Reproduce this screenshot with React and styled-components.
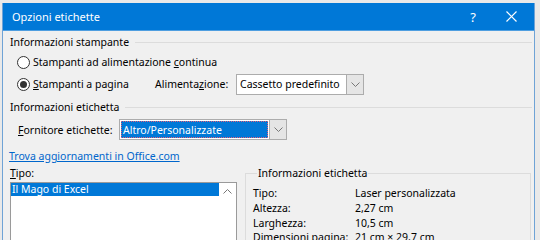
import React from "react";
import styled, { createGlobalStyle } from "styled-components";

const Global = createGlobalStyle`
  html, body { margin: 0; padding: 0; background: #e9e9e9; }
  body { font-family: "Noto Sans", "Liberation Sans", sans-serif; font-size: 10.5px; color: #000; }
  * { box-sizing: border-box; }
`;

const Frame = styled.div`
  padding: 3px 5px 0 2px;
  width: 540px;
  height: 240px;
  overflow: hidden;
`;

const Window = styled.div`
  width: 533px;
  height: 260px;
  display: flex;
  flex-direction: column;
  border-left: 1px solid #6fa3d6;
  border-right: 1px solid #6fa3d6;
  background: #f0f0f0;
`;

const TitleBar = styled.div`
  height: 28px;
  background: #0078d7;
  display: flex;
  align-items: center;
  padding-left: 9px;
  color: #fff;
  font-size: 11px;
  border-bottom: 1px solid #4f9ee0;
`;

const Title = styled.div`
  flex: 1;
`;

const TitleButton = styled.div`
  width: ${(p) => p.$w}px;
  display: flex;
  justify-content: center;
  align-items: center;
  font-size: 13px;
`;

const Body = styled.div`
  padding: 3px 0 0 7px;
  display: flex;
  flex-direction: column;
`;

const SectionHeader = styled.div`
  height: 16px;
  display: flex;
  align-items: center;
  gap: 6px;
  margin-top: ${(p) => p.$mt || 0}px;
  &::after {
    content: "";
    flex: 1;
    height: 1px;
    background: #dcdcdc;
    margin-right: 2px;
  }
`;

const Row = styled.div`
  height: ${(p) => p.$h || 22}px;
  display: flex;
  align-items: center;
  margin-top: ${(p) => p.$mt || 0}px;
  padding-left: ${(p) => p.$pl || 0}px;
`;

const RadioCircle = styled.span`
  width: 13px;
  height: 13px;
  border-radius: 50%;
  border: 1px solid #333;
  background: #fff;
  display: inline-flex;
  align-items: center;
  justify-content: center;
  margin-left: 7px;
  margin-right: 3px;
  &::after {
    content: "";
    width: 7px;
    height: 7px;
    border-radius: 50%;
    background: ${(p) => (p.$on ? "#333" : "transparent")};
  }
`;

const Label = styled.span`
  width: ${(p) => (p.$w ? p.$w + "px" : "auto")};
  margin-left: ${(p) => p.$ml || 0}px;
  white-space: nowrap;
`;

const Combo = styled.div`
  width: ${(p) => p.$w}px;
  height: 21px;
  display: flex;
  border: 1px solid #acacac;
  background: #fff;
`;

const ComboText = styled.div`
  flex: 1;
  display: flex;
  align-items: center;
  padding-left: 2px;
  margin: 1px;
  ${(p) =>
    p.$sel &&
    `background: #0078d7; color: #fff; outline: 1px dotted #e0607a; outline-offset: -1px;`}
`;

const ComboButton = styled.div`
  width: 17px;
  background: #e5e5e5;
  border-left: 1px solid #acacac;
  display: flex;
  align-items: center;
  justify-content: center;
`;

const Link = styled.a`
  color: #0066cc;
  text-decoration: underline;
  margin-left: -1px;
`;

const Bottom = styled.div`
  display: flex;
  margin-top: 1px;
`;

const LeftCol = styled.div`
  width: 227px;
  display: flex;
  flex-direction: column;
`;

const ListBox = styled.div`
  height: 80px;
  margin-top: 1px;
  border: 1px solid #9a9a9a;
  background: #fff;
  display: flex;
`;

const ListItems = styled.div`
  flex: 1;
`;

const ListItem = styled.div`
  height: 13px;
  line-height: 13px;
  padding-left: 1px;
  background: ${(p) => (p.$sel ? "#0078d7" : "transparent")};
  color: ${(p) => (p.$sel ? "#fff" : "#000")};
`;

const ScrollBar = styled.div`
  width: 17px;
  background: #fff;
  display: flex;
  justify-content: center;
  padding-top: 6px;
`;

const InfoBox = styled.fieldset`
  margin: 0 0 0 8px;
  width: 286px;
  border: 1px solid #dcdcdc;
  padding: 5px 6px 0 7px;
  min-width: 0;
  & > legend {
    padding: 0 1px;
    margin-left: 4px;
    line-height: 16px;
  }
`;

const InfoRow = styled.div`
  height: 14.7px;
  display: flex;
  align-items: center;
`;

const InfoKey = styled.span`
  width: 102px;
`;

const Chevron = ({ up }) => (
  <svg width="9" height="5" viewBox="0 0 9 5">
    <polyline
      points={up ? "0.5,4.5 4.5,0.5 8.5,4.5" : "0.5,0.5 4.5,4.5 8.5,0.5"}
      fill="none"
      stroke="#777"
      strokeWidth="1"
    />
  </svg>
);

export default function App() {
  return (
    <Frame>
      <Global />
      <Window>
        <TitleBar>
          <Title>Opzioni etichette</Title>
          <TitleButton $w={30}>?</TitleButton>
          <TitleButton $w={46}>
            <svg width="11" height="11" viewBox="0 0 11 11">
              <path d="M0.5 0.5 L10.5 10.5 M10.5 0.5 L0.5 10.5" stroke="#fff" strokeWidth="1.2" />
            </svg>
          </TitleButton>
        </TitleBar>
        <Body>
          <SectionHeader>Informazioni stampante</SectionHeader>
          <Row $mt={1}>
            <RadioCircle />
            <Label>
              Stampanti ad alimentazione <u>c</u>ontinua
            </Label>
          </Row>
          <Row>
            <RadioCircle $on />
            <Label $w={122}>
              <u>S</u>tampanti a pagina
            </Label>
            <Label $w={81}>
              Alimenta<u>z</u>ione:
            </Label>
            <Combo $w={128}>
              <ComboText>Cassetto predefinito</ComboText>
              <ComboButton>
                <Chevron />
              </ComboButton>
            </Combo>
          </Row>
          <SectionHeader $mt={4}>Informazioni etichetta</SectionHeader>
          <Row $h={21} $mt={4} $pl={8}>
            <Label $w={101}>
              <u>F</u>ornitore etichette:
            </Label>
            <Combo $w={168}>
              <ComboText $sel>Altro/Personalizzate</ComboText>
              <ComboButton>
                <Chevron />
              </ComboButton>
            </Combo>
          </Row>
          <Row $h={16} $mt={8}>
            <Link>Trova aggiornamenti in Office.com</Link>
          </Row>
          <Bottom>
            <LeftCol>
              <Row $h={16}>
                <Label>
                  <u>T</u>ipo:
                </Label>
              </Row>
              <ListBox>
                <ListItems>
                  <ListItem $sel>Il Mago di Excel</ListItem>
                </ListItems>
                <ScrollBar>
                  <Chevron up />
                </ScrollBar>
              </ListBox>
            </LeftCol>
            <InfoBox>
              <legend>Informazioni etichetta</legend>
              <InfoRow>
                <InfoKey>Tipo:</InfoKey>
                <span>Laser personalizzata</span>
              </InfoRow>
              <InfoRow>
                <InfoKey>Altezza:</InfoKey>
                <span>2,27 cm</span>
              </InfoRow>
              <InfoRow>
                <InfoKey>Larghezza:</InfoKey>
                <span>10,5 cm</span>
              </InfoRow>
              <InfoRow>
                <InfoKey>Dimensioni pagina:</InfoKey>
                <span>21 cm × 29,7 cm</span>
              </InfoRow>
            </InfoBox>
          </Bottom>
        </Body>
      </Window>
    </Frame>
  );
}
